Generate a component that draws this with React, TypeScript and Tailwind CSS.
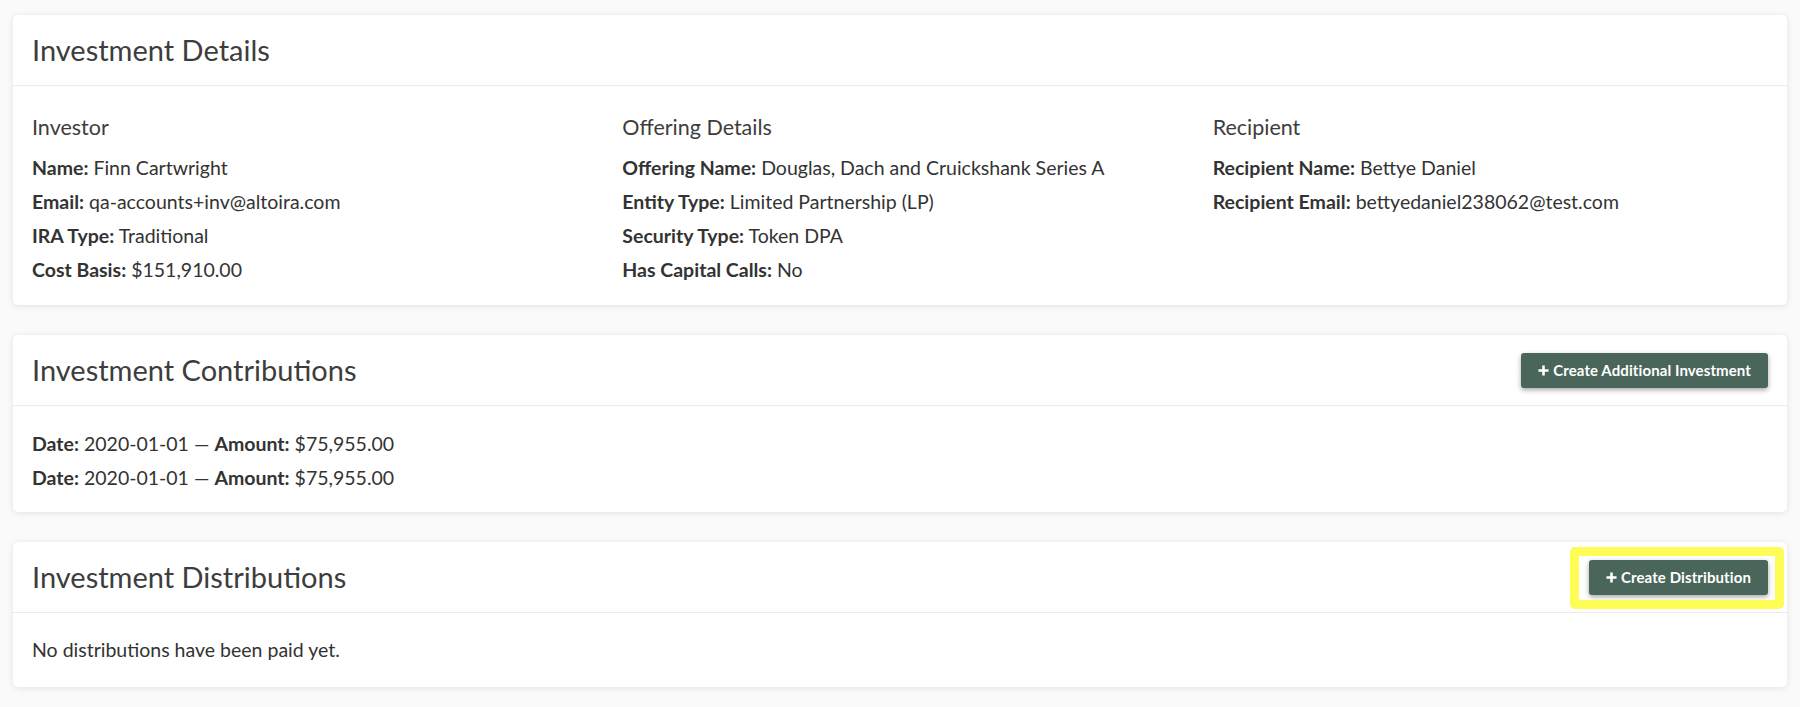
import React from "react";

const font = { fontFamily: "Lato, 'Open Sans', sans-serif" };

function Row({ label, value }: { label: string; value: React.ReactNode }) {
  return (
    <div className="text-[19.5px] leading-[24px] text-[#333]">
      <span className="font-bold">{label}</span> {value}
    </div>
  );
}

function Plus() {
  return (
    <svg width="11" height="11" viewBox="0 0 12 12" className="mr-[4px] shrink-0">
      <path d="M6 0.5v11M0.5 6h11" stroke="white" strokeWidth="2.8" />
    </svg>
  );
}

function Btn({ children }: { children: React.ReactNode }) {
  return (
    <button className="flex items-center h-[35px] px-[17px] rounded-[3px] bg-[#4a665b] text-white font-bold text-[15px] tracking-[0.1px] shadow-[0_2px_5px_rgba(0,0,0,0.35)]">
      <Plus />
      {children}
    </button>
  );
}

function Card({
  title,
  action,
  children,
}: {
  title: string;
  action?: React.ReactNode;
  children: React.ReactNode;
}) {
  return (
    <div className="bg-white rounded-[5px] shadow-[0_1px_6px_rgba(0,0,0,0.1)]">
      <div className="h-[71px] px-[19px] flex items-center justify-between border-b border-[#ebebeb]">
        <h2 className="text-[29px] text-[#3d3d3d] font-normal">{title}</h2>
        {action}
      </div>
      {children}
    </div>
  );
}

function Sub({ children }: { children: React.ReactNode }) {
  return <div className="text-[21.5px] leading-[28px] mb-[15px] text-[#3d3d3d]">{children}</div>;
}

export default function App() {
  return (
    <div className="min-h-[707px] bg-[#fafafa] px-[13px] pt-[15px] pb-[20px] flex flex-col gap-[30px]" style={font}>
      <Card title="Investment Details">
        <div className="px-[19px] pt-[27px] pb-[23px] grid grid-cols-3 gap-[35px]">
          <div>
            <Sub>Investor</Sub>
            <div className="flex flex-col gap-[10px]">
              <Row label="Name:" value="Finn Cartwright" />
              <Row label="Email:" value="qa-accounts+inv@altoira.com" />
              <Row label="IRA Type:" value="Traditional" />
              <Row label="Cost Basis:" value="$151,910.00" />
            </div>
          </div>
          <div>
            <Sub>Offering Details</Sub>
            <div className="flex flex-col gap-[10px]">
              <Row label="Offering Name:" value="Douglas, Dach and Cruickshank Series A" />
              <Row label="Entity Type:" value="Limited Partnership (LP)" />
              <Row label="Security Type:" value="Token DPA" />
              <Row label="Has Capital Calls:" value="No" />
            </div>
          </div>
          <div>
            <Sub>Recipient</Sub>
            <div className="flex flex-col gap-[10px]">
              <Row label="Recipient Name:" value="Bettye Daniel" />
              <Row label="Recipient Email:" value="bettyedaniel238062@test.com" />
            </div>
          </div>
        </div>
      </Card>

      <Card title="Investment Contributions" action={<Btn>Create Additional Investment</Btn>}>
        <div className="px-[19px] pt-[26px] pb-[22px] flex flex-col gap-[10px]">
          {[0, 1].map((i) => (
            <div key={i} className="text-[19.5px] leading-[24px] text-[#333]">
              <span className="font-bold">Date:</span> 2020-01-01 {"\u2014"}
              <span className="font-bold ml-[5px]">Amount:</span> $75,955.00
            </div>
          ))}
        </div>
      </Card>

      <Card
        title="Investment Distributions"
        action={
          <div className="relative">
            <Btn>Create Distribution</Btn>
            <span className="absolute -left-[19px] -right-[16px] -top-[13px] -bottom-[14px] border-[9px] border-[#fdfd55] rounded-[5px] pointer-events-none" />
          </div>
        }
      >
        <div className="px-[19px] pt-[25px] pb-[25px] text-[19.5px] leading-[24px] text-[#333]">
          No distributions have been paid yet.
        </div>
      </Card>
    </div>
  );
}
